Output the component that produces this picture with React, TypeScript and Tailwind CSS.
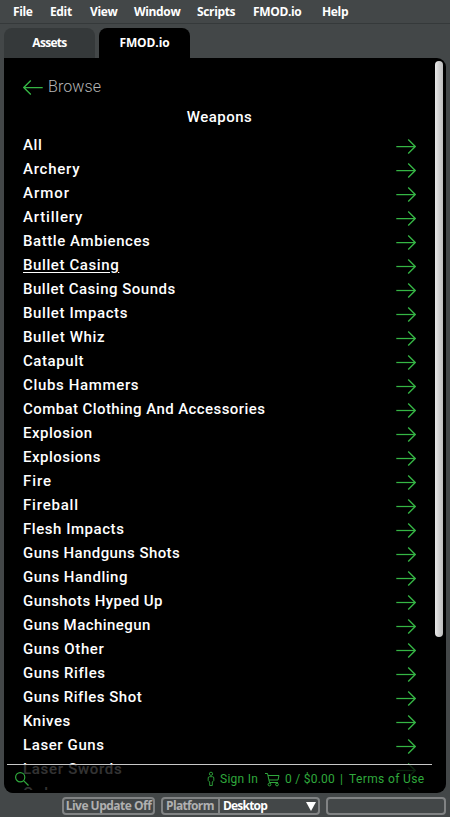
const menu: [string, string][] = [
  ["File", "w-[37px]"], ["Edit", "w-[40px]"], ["View", "w-[44px]"], ["Window", "w-[63px]"],
  ["Scripts", "w-[56px]"], ["FMOD.io", "w-[69px]"], ["Help", "w-[40px]"],
];

const categories: [string, string][] = [
  ["All", "tracking-[0.6px]"], ["Archery", "tracking-[0.75px]"], ["Armor", "tracking-[0.95px]"],
  ["Artillery", "tracking-[0.8px]"], ["Battle Ambiences", "tracking-[0.57px]"],
  ["Bullet Casing", "tracking-[0.6px]"], ["Bullet Casing Sounds", "tracking-[0.5px]"],
  ["Bullet Impacts", "tracking-[0.6px]"], ["Bullet Whiz", "tracking-[0.65px]"],
  ["Catapult", "tracking-[0.57px]"], ["Clubs Hammers", "tracking-[0.65px]"],
  ["Combat Clothing And Accessories", "tracking-[0.42px]"], ["Explosion", "tracking-[0.5px]"],
  ["Explosions", "tracking-[0.5px]"], ["Fire", "tracking-[0.9px]"], ["Fireball", "tracking-[0.8px]"],
  ["Flesh Impacts", "tracking-[0.55px]"], ["Guns Handguns Shots", "tracking-[0.42px]"],
  ["Guns Handling", "tracking-[0.5px]"], ["Gunshots Hyped Up", "tracking-[0.42px]"],
  ["Guns Machinegun", "tracking-[0.45px]"], ["Guns Other", "tracking-[0.6px]"],
  ["Guns Rifles", "tracking-[0.55px]"], ["Guns Rifles Shot", "tracking-[0.5px]"],
  ["Knives", "tracking-[0.5px]"], ["Laser Guns", "tracking-[0.6px]"],
  ["Laser Swords", "tracking-[0.7px]"], ["Ordnance", "tracking-[0.5px]"],
];

function Arrow({ className = "" }: { className?: string }) {
  return (
    <svg className={className} width="20" height="16" viewBox="0 0 20 16" fill="none" stroke="#35b544">
      <path d="M0.3 8.5H19" strokeWidth="1.25" />
      <path d="M12.2 1.5L19.2 8.5L12.2 15.5" strokeWidth="1.35" />
    </svg>
  );
}

export default function App() {
  return (
    <div className="flex h-[817px] w-[450px] flex-col overflow-hidden bg-[#434748] font-['Open_Sans',sans-serif] text-xs text-white">
      <nav className="flex h-6 shrink-0 items-center border-b border-[#35393a] pl-[13px] font-bold tracking-[-0.35px]">
        {menu.map(([name, width]) => (
          <span key={name} className={`${width} shrink-0 whitespace-nowrap`}>{name}</span>
        ))}
      </nav>
      <div className="flex h-[34px] shrink-0 items-end gap-1 pl-1 text-[12px] font-bold">
        <div className="flex h-[30px] w-[91px] items-center justify-center rounded-t-lg bg-[#35393a] tracking-[-0.7px]">Assets</div>
        <div className="flex h-[30px] w-[91px] items-center justify-center rounded-t-lg bg-black tracking-[-0.1px]">FMOD.io</div>
      </div>

      <main className="relative mx-1 h-[735px] shrink-0 overflow-hidden rounded-b-[9px] rounded-tr-[9px] bg-black font-['Roboto',sans-serif]">
        <div className="h-[732px] overflow-hidden">
          <div className="flex h-[47px] items-end pb-[8px] pl-[19px]">
            <Arrow className="mb-px rotate-180" />
            <span className="ml-[5px] text-[16px] font-light leading-[20px] tracking-[0.1px] text-[#b5b5b5]">Browse</span>
          </div>
          <h1 className="h-7 pr-[11px] text-center text-[15px] font-medium leading-6 tracking-[0.5px]">Weapons</h1>
          <ul>
            {categories.map(([name, tracking]) => (
              <li key={name} className="flex h-6 items-center justify-between pr-[30px] pl-[19px]">
                <span className={`${tracking} whitespace-nowrap text-[15px] font-medium leading-6 ${name === "Bullet Casing" ? "underline underline-offset-2" : ""}`}>{name}</span>
                <Arrow className="mt-[2px]" />
              </li>
            ))}
          </ul>
        </div>
        <div className="absolute top-[3px] right-[3px] h-[576px] w-2 rounded-full bg-linear-to-r from-[#e8e8e8] to-[#bcbcbc]" />
        <footer className="absolute bottom-0 left-[3px] flex h-[29px] w-[425px] items-center border-t border-[#c8c8c8] bg-black/80 text-[12px] tracking-[0.25px] text-[#2fa83c]">
          <svg className="mb-px ml-2" width="14" height="14" viewBox="0 0 14 14" fill="none" stroke="currentColor" strokeWidth="1.2">
            <circle cx="5.2" cy="5.2" r="4.6" /><path d="M8.6 8.6L13.5 13.5" />
          </svg>
          <svg className="ml-[178px]" width="8" height="16" viewBox="0 0 8 16" fill="none" stroke="currentColor" strokeWidth=".9">
            <circle cx="4" cy="2.8" r="1.6" /><path d="M2.7 14.5V11L1.2 9.5V7Q1.2 5.7 2.5 5.7H5.5Q6.8 5.7 6.8 7V9.5L5.3 11V14.5Z" />
          </svg>
          <span className="ml-[5px] w-[45px] whitespace-nowrap">Sign In</span>
          <svg width="15" height="15" viewBox="0 0 15 15" fill="none" stroke="currentColor" strokeWidth="1">
            <path d="M0 1.5H2.5L4.5 10.5H13M3 3.5H14L13 8H4" /><circle cx="4.5" cy="12.5" r="1.4" /><circle cx="12" cy="12.5" r="1.4" />
          </svg>
          <span className="ml-[5px] w-[55px] whitespace-nowrap">0 / $0.00</span>
          <span className="w-[9px]">|</span>
          <span className="whitespace-nowrap tracking-[0.38px]">Terms of Use</span>
        </footer>
      </main>

      <div className="mt-1 ml-[62px] flex h-[18px] shrink-0 gap-[6px] font-bold leading-[14px] text-[#b0b0b0]">
        <div className="flex w-[93px] items-center justify-center whitespace-nowrap rounded-[4px] border-2 border-[#818384] tracking-[-0.5px]">Live Update Off</div>
        <div className="flex w-[159px] items-center rounded-[4px] border-2 border-[#818384]">
          <span className="w-[55px] pl-[3px] tracking-[-0.65px]">Platform</span>
          <div className="flex h-full flex-1 items-center justify-between border-l-2 border-[#818384] pr-[2px] pl-[3px] tracking-[-0.85px] text-white">
            <span className="tracking-[-0.8px]">Desktop</span>
            <svg width="10" height="9" viewBox="0 0 10 9"><path d="M0 0H10L5 9Z" fill="white" /></svg>
          </div>
        </div>
        <div className="w-[120px] rounded-[4px] border-2 border-[#818384]" />
      </div>
    </div>
  );
}
